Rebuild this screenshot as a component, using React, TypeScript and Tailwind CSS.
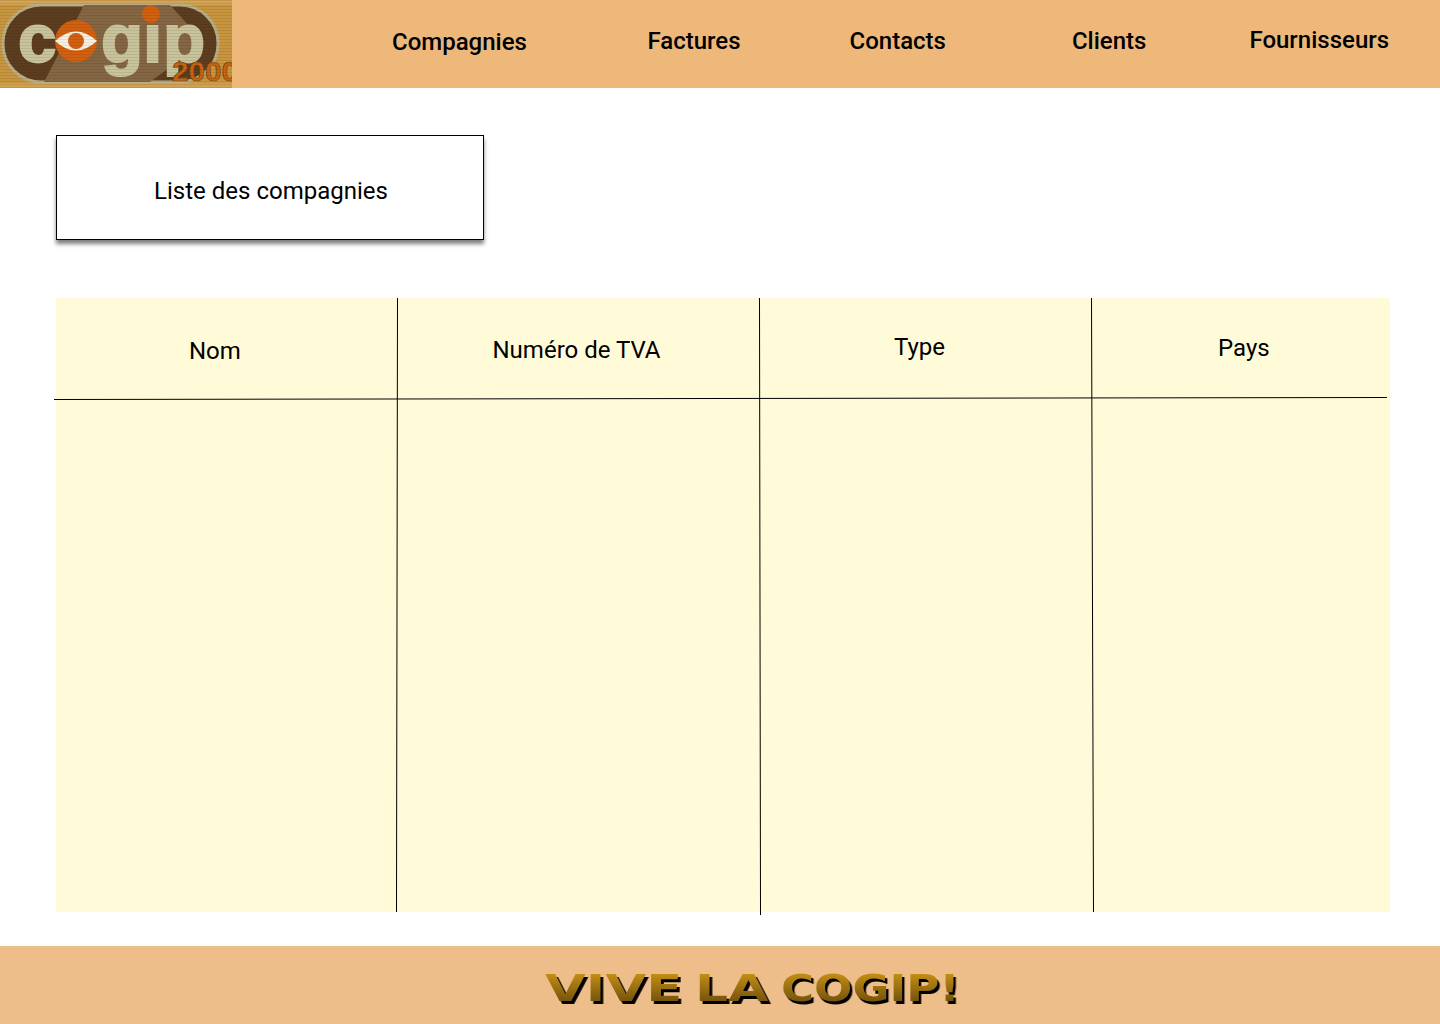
const links = [
  { label: "Compagnies", className: "ml-[160px] mt-[-5px]" },
  { label: "Factures", className: "ml-[120.5px] mt-[-7px]" },
  { label: "Contacts", className: "ml-[109px] mt-[-7px]" },
  { label: "Clients", className: "ml-[126px] mt-[-7px]" },
  { label: "Fournisseurs", className: "ml-[103px] mt-[-9px]" },
];

const columns = [
  { label: "Nom", className: "pl-[133px] pt-[39px]" },
  { label: "Numéro de TVA", className: "pl-[95.5px] pt-[38px]" },
  { label: "Type", className: "pl-[135px] pt-[35px]" },
  { label: "Pays", className: "pl-[127px] pt-[36px]" },
];

const slogan = [
  { word: "VIVE", className: "w-[136px] mr-[14px] scale-x-[1.388]" },
  { word: "LA", className: "w-[71px] mr-[15px] scale-x-[1.37]" },
  { word: "COGIP!", className: "w-[175px] scale-x-[1.187]" },
];

function Logo() {
  return (
    <svg width="232" height="88" viewBox="0 0 232 88" className="shrink-0 block">
      <defs>
        <pattern id="scan" width="3" height="3" patternUnits="userSpaceOnUse">
          <rect width="3" height="1" fill="#000" opacity="0.08" />
        </pattern>
        <clipPath id="pill">
          <rect x="3" y="5" width="215" height="77" rx="38" />
        </clipPath>
      </defs>
      <rect width="232" height="88" fill="#c8953f" />
      <rect x="0" y="0" width="232" height="5" fill="#dcae62" opacity="0.6" />
      <rect x="0" y="83" width="232" height="5" fill="#dcae62" opacity="0.5" />
      <rect x="3" y="5" width="215" height="77" rx="38" fill="#5d3d1f" stroke="#b9ad85" strokeWidth="3" />
      <polygon points="44,82 84,5 170,5 204,42 150,82" fill="#856643" clipPath="url(#pill)" />
      <circle cx="76" cy="41" r="21" fill="#d2600f" />
      <path d="M55 41 Q76 22 97 41 Q76 60 55 41 Z" fill="#f6f0e4" />
      <circle cx="76" cy="41" r="8" fill="#d2600f" />
      <circle cx="151" cy="14" r="9" fill="#d2600f" />
      <g fill="#c9c39c" stroke="#c9c39c" strokeWidth="2" fontFamily="'Liberation Sans', sans-serif" fontWeight="700" fontSize="69">
        <text x="18" y="62">c</text>
        <text x="101" y="62">g</text>
        <text x="143" y="62">ı</text>
        <text x="163" y="62">p</text>
      </g>
      <text
        x="172"
        y="81"
        fill="#c9640f"
        stroke="#6b3f14"
        strokeWidth="0.6"
        fontFamily="'Liberation Sans', sans-serif"
        fontWeight="700"
        fontSize="28"
        textLength="66"
        lengthAdjust="spacingAndGlyphs"
      >
        2000
      </text>
      <rect width="232" height="88" fill="url(#scan)" />
    </svg>
  );
}

export default function App() {
  return (
    <div className="w-[1440px] h-[1024px] overflow-hidden bg-white text-[24px] leading-[28px] text-black font-['Roboto',sans-serif]">
      <header className="h-[88px] bg-[#eeb87b] flex items-center">
        <Logo />
        <nav className="flex items-center font-medium">
          {links.map((link) => (
            <a key={link.label} href="#" className={link.className}>
              {link.label}
            </a>
          ))}
        </nav>
      </header>

      <main className="pt-[47px] pl-[56px]">
        <div className="w-[428px] h-[105px] border border-black bg-white shadow-[0_4px_4px_rgba(0,0,0,0.5)] flex items-center justify-center pl-[2px] pt-[7px]">
          Liste des compagnies
        </div>

        <section className="relative mt-[58px] w-[1334px] h-[614px] bg-[#fffbd9]">
          <div className="grid grid-cols-[341px_362px_332px_299px]">
            {columns.map((col) => (
              <div key={col.label} className={col.className}>
                {col.label}
              </div>
            ))}
          </div>
          {/* the rules are hand drawn and slightly off square */}
          <svg
            width="1334"
            height="614"
            viewBox="0 0 1334 614"
            className="absolute inset-0 overflow-visible pointer-events-none"
            stroke="#000"
            strokeWidth="1"
          >
            <line x1="-2" y1="101.5" x2="1331" y2="99.5" />
            <line x1="341.5" y1="0" x2="340.5" y2="614" />
            <line x1="703.5" y1="0" x2="704.5" y2="617" />
            <line x1="1035.5" y1="0" x2="1037.5" y2="614" />
          </svg>
        </section>
      </main>

      <footer className="mt-[34px] h-[78px] bg-[#eebe8a] flex pt-[20px] pl-[545px]">
        {slogan.map((item) => (
          <span
            key={item.word}
            className={`${item.className} h-[44px] origin-left font-['DejaVu_Sans',sans-serif] font-bold text-[38px] leading-[44px] whitespace-nowrap bg-gradient-to-b from-[#d9a017] to-[#5f4209] bg-clip-text text-transparent [filter:drop-shadow(2px_3px_0_#000)]`}
          >
            {item.word}
          </span>
        ))}
      </footer>
    </div>
  );
}
